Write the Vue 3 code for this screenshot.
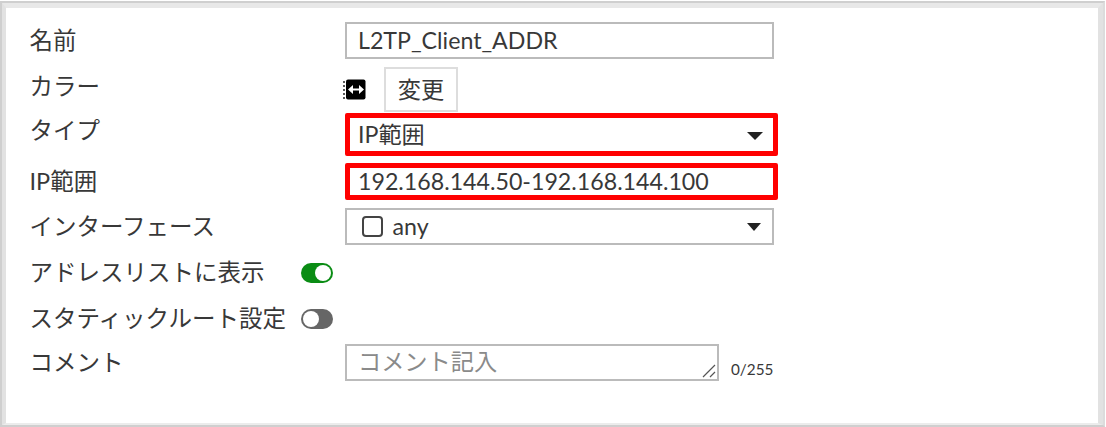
<script setup>
const counter = '0/255'
</script>

<template>
  <div class="frame">
    <div class="panel">
      <div class="form">
        <div class="row row-name">
          <div class="label">名前</div>
          <div class="field">L2TP_Client_ADDR</div>
        </div>

        <div class="row row-color">
          <div class="label">カラー</div>
          <svg class="swatch" viewBox="0 0 23 21" width="23" height="21">
            <rect x="3" y="0.5" width="19.5" height="20" rx="2" fill="#000" />
            <path d="M1 2v2M1 6v2M1 10v2M1 14v2M1 18v2" stroke="#222" stroke-width="1.5" />
            <path d="M8 10.5h10" stroke="#fff" stroke-width="2" />
            <path d="M5 10.5l5-4.4v8.8zM21 10.5l-5-4.4v8.8z" fill="#fff" />
          </svg>
          <div class="change-btn">変更</div>
        </div>

        <div class="row row-type">
          <div class="label">タイプ</div>
          <div class="field field-marked field-select">
            <span>IP範囲</span>
            <span class="caret caret-big"></span>
          </div>
        </div>

        <div class="row row-range">
          <div class="label">IP範囲</div>
          <div class="field field-marked">192.168.144.50-192.168.144.100</div>
        </div>

        <div class="row row-iface">
          <div class="label">インターフェース</div>
          <div class="field field-select">
            <span class="iface-value"><span class="iface-box"></span>any</span>
            <span class="caret"></span>
          </div>
        </div>

        <div class="row row-toggle">
          <div class="label label-short">アドレスリストに表示</div>
          <span class="toggle on"><span class="knob"></span></span>
        </div>

        <div class="row row-toggle">
          <div class="label label-short">スタティックルート設定</div>
          <span class="toggle"><span class="knob"></span></span>
        </div>

        <div class="row row-comment">
          <div class="label">コメント</div>
          <div class="comment-box">
            <span>コメント記入</span>
            <svg class="grip" viewBox="0 0 14 14" width="14" height="14">
              <path d="M1 13L13 1M8 13l5-5" stroke="#555" stroke-width="1.2" fill="none" />
            </svg>
          </div>
          <span class="count">{{ counter }}</span>
        </div>
      </div>
    </div>
  </div>
</template>

<style>
html, body {
  margin: 0;
  background: #fff;
}
</style>

<style scoped>
.frame {
  width: 1105px;
  height: 426px;
  margin-top: 1px;
  box-sizing: border-box;
  border-top: 2px solid #cfcfcf;
  border-left: 2px solid #cfcfcf;
  border-right: 2px solid #dcdcdc;
  border-bottom: 2px solid #cfcfcf;
  font-family: Lato, "Noto Sans CJK JP", sans-serif;
  color: #383838;
  font-size: 23.2px;
}

.panel {
  height: 100%;
  box-sizing: border-box;
  background: #fff;
  border-top: 5px solid #e8e8e8;
  border-left: 4px solid #e2e2e2;
  border-right: 5px solid #e2e2e2;
  border-bottom: 2px solid #ececec;
  padding: 14px 0 0 23.5px;
}

.row {
  display: flex;
  align-items: center;
}

.label {
  width: 315.5px;
  flex: none;
  line-height: 37px;
  font-size: 23.5px;
}

.label-short {
  width: 271.5px;
  margin-top: -2px;
}

.field {
  width: 429px;
  height: 37px;
  box-sizing: border-box;
  border: 2px solid #bbb;
  padding-left: 11px;
  line-height: 33px;
  background: #fff;
}

.field-select {
  display: flex;
  justify-content: space-between;
  align-items: center;
  padding-right: 11px;
}

.field-marked {
  width: 433px;
  border: 5px solid #f00;
  border-radius: 2px;
  padding-left: 8px;
  line-height: 27px;
}

.row-color {
  margin-top: 8px;
  height: 45px;
  align-items: flex-start;
}

.row-color .label {
  margin-top: 1px;
}

.swatch {
  margin: 12px 18px 0 -2px;
  flex: none;
}

.change-btn {
  width: 74px;
  height: 45px;
  box-sizing: border-box;
  border: 2px solid #ddd;
  text-align: center;
  line-height: 41px;
}

.row-type {
  margin-top: 1px;
  height: 43px;
}

.row-type .label {
  margin-top: -8px;
}

.row-type .field {
  height: 43px;
  padding-right: 10px;
}

.row-type .caret {
  margin-top: 2px;
}

.row-range {
  margin-top: 7px;
}

.row-iface {
  margin-top: 8px;
}

.iface-value {
  display: flex;
  align-items: center;
  line-height: 33px;
}

.iface-box {
  width: 17px;
  height: 17px;
  border: 2px solid #444;
  border-radius: 4px;
  margin: 0 10px 0 3.5px;
}

.caret {
  width: 0;
  height: 0;
  border-left: 7.5px solid transparent;
  border-right: 7.5px solid transparent;
  border-top: 8px solid #222;
}

.caret-big {
  border-left-width: 8.5px;
  border-right-width: 8.5px;
}

.row-toggle {
  height: 46px;
}

.row-iface + .row-toggle {
  margin-top: 5px;
}

.toggle {
  width: 32px;
  height: 20px;
  box-sizing: border-box;
  border-radius: 10px;
  background: #666;
  display: flex;
  padding: 2px;
}

.toggle.on {
  background: #0a8c14;
  justify-content: flex-end;
}

.knob {
  width: 16px;
  height: 16px;
  border-radius: 50%;
  background: #fff;
}

.row-comment {
  margin-top: 2px;
}

.comment-box {
  width: 374px;
  height: 37px;
  box-sizing: border-box;
  border: 2px solid #bbb;
  padding-left: 11px;
  line-height: 30px;
  color: #8a8a8a;
  position: relative;
}

.grip {
  position: absolute;
  right: 1px;
  bottom: 1px;
}

.count {
  font-size: 15.3px;
  margin: 12px 0 0 12px;
}
</style>
